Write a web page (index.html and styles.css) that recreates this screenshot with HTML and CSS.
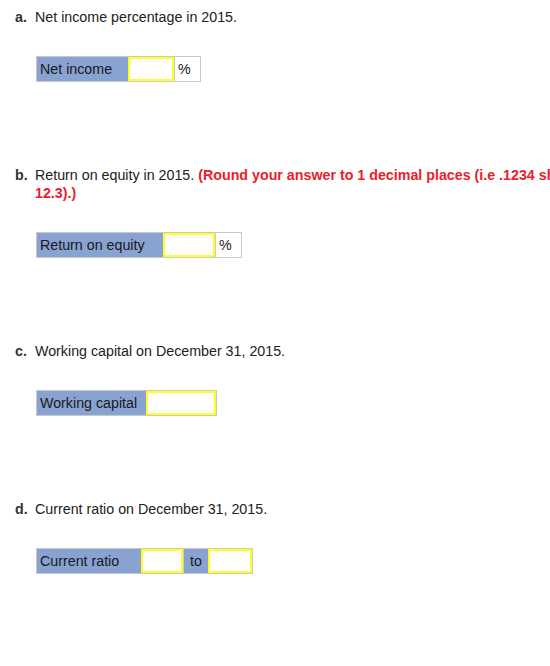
FILE: index.html
```html
<!DOCTYPE html>
<html>
<head>
<meta charset="utf-8">
<link rel="stylesheet" href="styles.css">
</head>
<body>
<div class="page">
  <section class="item">
    <div class="q"><b class="mark">a.</b><span>Net income percentage in 2015.</span></div>
    <div class="answer">
      <div class="label w-a">Net income</div>
      <div class="input i-a"></div>
      <div class="unit">%</div>
    </div>
  </section>
  <section class="item">
    <div class="q"><b class="mark">b.</b><span>Return on equity in 2015. <b class="red">(Round your answer to 1 decimal places (i.e .1234 should be entered as</b><br><b class="red">12.3).)</b></span></div>
    <div class="answer">
      <div class="label w-b">Return on equity</div>
      <div class="input i-b"></div>
      <div class="unit">%</div>
    </div>
  </section>
  <section class="item">
    <div class="q"><b class="mark">c.</b><span>Working capital on December 31, 2015.</span></div>
    <div class="answer">
      <div class="label w-c">Working capital</div>
      <div class="input i-c"></div>
    </div>
  </section>
  <section class="item">
    <div class="q"><b class="mark">d.</b><span>Current ratio on December 31, 2015.</span></div>
    <div class="answer">
      <div class="label w-d">Current ratio</div>
      <div class="input i-d1"></div>
      <div class="label to">to</div>
      <div class="input i-d2"></div>
    </div>
  </section>
</div>
</body>
</html>
```
FILE: styles.css
```css
html, body {
  margin: 0;
  padding: 0;
  overflow: hidden;
  background: #fff;
}
body {
  font-family: "Liberation Sans", Arial, sans-serif;
  font-size: 14.25px;
  color: #222;
}
.page {
  width: 720px;
  padding-top: 8px;
  display: flex;
  flex-direction: column;
  gap: 84px;
}
.item {
  display: flex;
  flex-direction: column;
  gap: 30px;
}
.q {
  display: flex;
  line-height: 18px;
  white-space: nowrap;
}
.mark {
  width: 20px;
  padding-left: 15px;
  flex: none;
  color: #333;
}
.red {
  color: #e8212b;
}
.answer {
  margin-left: 36px;
  align-self: flex-start;
  display: flex;
  border: 1px solid #c9c9c9;
  height: 24px;
}
.label {
  background: #88a2d2;
  line-height: 24px;
  padding-left: 3px;
  box-sizing: border-box;
  color: #1a1a1a;
}
.w-a { width: 91px; }
.w-b { width: 126px; }
.w-c { width: 109px; }
.w-d { width: 104px; }
.to {
  width: 25px;
  padding-left: 6px;
  border-left: 1px solid #c9c9c9;
}
.input {
  box-sizing: border-box;
  height: 24px;
  border: 2px solid #ffff22;
  background: #fff;
}
.i-a { width: 46px; }
.i-b { width: 52px; }
.i-c { width: 70px; }
.i-d1 { width: 42px; }
.i-d2 { width: 44px; }
.unit {
  border-left: 1px solid #c9c9c9;
  line-height: 24px;
  padding-left: 3px;
  width: 22px;
  color: #1a1a1a;
}
```
